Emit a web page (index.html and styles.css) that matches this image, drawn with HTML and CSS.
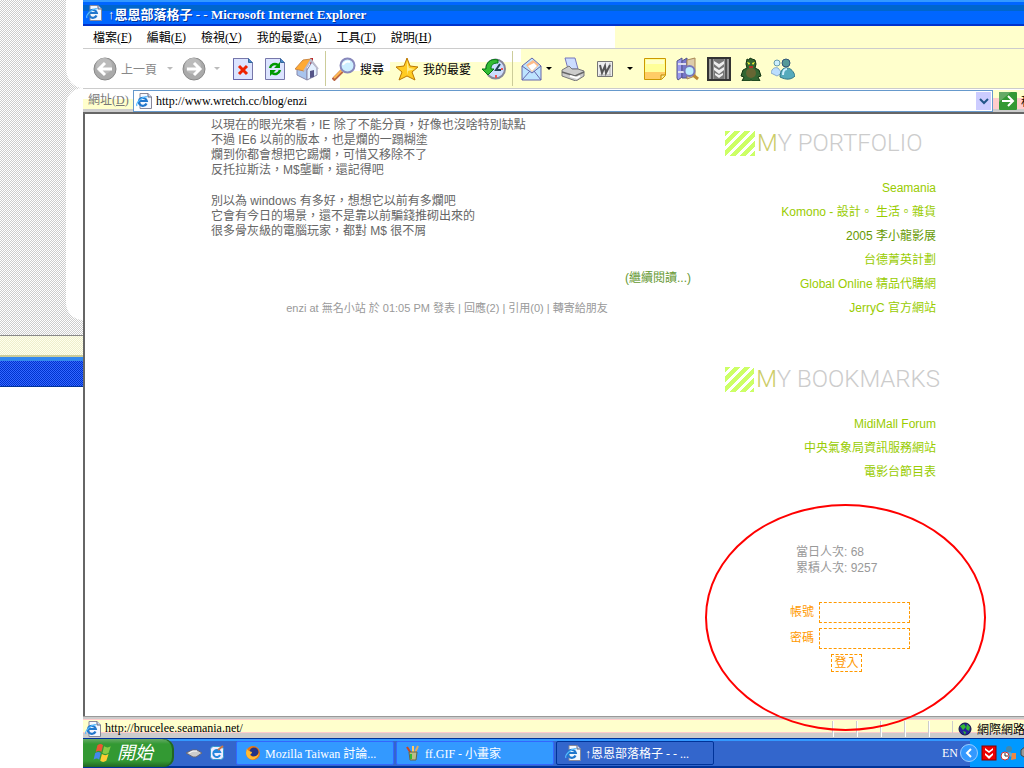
FILE: index.html
```
<!DOCTYPE html>
<html lang="zh-Hant">
<head>
    <meta charset="UTF-8">
    <meta name="viewport" content="width=device-width, initial-scale=1.0">
    <title>↑恩恩部落格子</title>
    <link rel="stylesheet" href="styles.css">
</head>
<body>

    <!-- Shared icon -->
    <svg class="sprite" aria-hidden="true">
        <symbol id="ie-page" viewBox="0 0 16 16">
            <path d="M4 .5h8l3.500 3.500v11.500H4z" fill="#f4f8ff" stroke="#889"/>
            <path d="M12 .5V4h3.500" fill="#cdf" stroke="#667"/>
            <path d="M10.500 10.500A4 4 0 1 1 10.800 8H3.500" fill="none" stroke="#27c" stroke-width="2.200"/>
            <path d="M1 13C-1 10 8 2 11.500 4" fill="none" stroke="#5bf" stroke-width="1.200"/>
        </symbol>
    </svg>

    <!-- Desktop behind the browser -->
    <div class="backdrop">
        <div class="backdrop-pattern">
            <div class="panel panel-top"></div>
            <div class="panel panel-bottom"></div>
        </div>
        <div class="backdrop-status"></div>
        <div class="backdrop-taskbar"></div>
    </div>

    <div class="screen">
        <header class="titlebar">
            <svg class="icon16"><use href="#ie-page"/></svg>
            <span>↑恩恩部落格子 - - Microsoft Internet Explorer</span>
        </header>

        <nav class="menubar">
            <button>檔案(<u>F</u>)</button>
            <button>編輯(<u>E</u>)</button>
            <button>檢視(<u>V</u>)</button>
            <button>我的最愛(<u>A</u>)</button>
            <button>工具(<u>T</u>)</button>
            <button>說明(<u>H</u>)</button>
        </nav>

        <!-- Toolbar -->
        <div class="toolbar">
            <button class="tool tool-back" disabled>
                <svg viewBox="0 0 24 24"><circle cx="12" cy="12" r="11" fill="#aaa" stroke="#888"/><circle cx="11" cy="9" r="8" fill="#bbb"/><path d="M19 12H7M12 6l-6 6 6 6" fill="none" stroke="#fff" stroke-width="3"/></svg>
                <span>上一頁</span>
                <i class="caret"></i>
            </button>
            <button class="tool tool-forward" disabled aria-label="下一頁">
                <svg viewBox="0 0 24 24"><circle cx="12" cy="12" r="11" fill="#aaa" stroke="#888"/><circle cx="11" cy="9" r="8" fill="#bbb"/><path d="M5 12h12M12 6l6 6-6 6" fill="none" stroke="#fff" stroke-width="3"/></svg>
                <i class="caret"></i>
            </button>
            <button class="tool" aria-label="停止">
                <svg viewBox="0 0 24 24"><path d="M2.500 1.500h15l4 4v17h-19z" fill="#dce4ff" stroke="#77a"/><path d="M17.500 1.500v4h4" fill="#48c" stroke="#369"/><path d="M2.500 1.500v21h19" fill="none" stroke="#66a"/><path d="M8 9l8 8M16 9l-8 8" stroke="#e20" stroke-width="3"/></svg>
            </button>
            <button class="tool" aria-label="重新整理">
                <svg viewBox="0 0 24 24"><path d="M2.500 1.500h15l4 4v17h-19z" fill="#dce4ff" stroke="#77a"/><path d="M17.500 1.500v4h4" fill="#48c" stroke="#369"/><path d="M7 11c1-4 5-5 8-3M17 13c-1 4-5 5-8 3" fill="none" stroke="#090" stroke-width="2.500"/><path d="M17 5v6h-6zM7 19v-6h6z" fill="#090"/></svg>
            </button>
            <button class="tool" aria-label="首頁">
                <svg viewBox="0 0 24 24"><path d="M15 1h3v7h-3z" fill="#b22"/><path d="M2 12v6l10 5V11L7 6z" fill="#a9c4ee" stroke="#88a"/><path d="M12 13v10l10-5v-7l-5-6z" fill="#e4f0ff" stroke="#88a"/><path d="M0 12L8 3l8-1-7 12z" fill="#fa3" stroke="#c84"/><path d="M9 14l7-11 7 9" fill="none" stroke="#bbc" stroke-width="2"/><path d="M15 14l4-1v7l-4 1z" fill="#558"/></svg>
            </button>
            <i class="divider"></i>
            <button class="tool tool-text">
                <svg viewBox="0 0 24 24"><path d="M1 23l9-9" stroke="#b64" stroke-width="4"/><path d="M2 21l8-8" stroke="#fb5" stroke-width="2"/><circle cx="15.500" cy="8.500" r="7" fill="#cef" stroke="#88b" stroke-width="2"/><path d="M11 8c1-3 4-4 7-3" fill="none" stroke="#fff" stroke-width="2"/></svg>
                <span>搜尋</span>
            </button>
            <button class="tool tool-text">
                <svg viewBox="0 0 24 24"><path d="M12 1l3 8 8 1-6 5 3 8-8-4-8 4 3-8-6-5 8-1z" fill="#fc2" stroke="#b70"/><path d="M12 4l2 7 6 1-7 2-1 4" fill="#fe8"/></svg>
                <span>我的最愛</span>
            </button>
            <button class="tool" aria-label="記錄">
                <svg viewBox="0 0 24 24"><circle cx="13.500" cy="12" r="9.500" fill="#cdf" stroke="#889" stroke-width="2"/><path d="M18 7l-4 6 5 0" fill="none" stroke="#245" stroke-width="2"/><path d="M16 3C8 1 4 6 4 12H0l6 6 6-6H9c0-4 2-6 7-6z" fill="#3b3" stroke="#071"/><path d="M14 18v3M21 12h-2" stroke="#e55" stroke-width="2"/></svg>
            </button>
            <i class="divider"></i>
            <button class="tool tool-mail" aria-label="郵件">
                <svg viewBox="0 0 24 24"><path d="M2 9L12 1l9 8v14H2z" fill="#bde4ff" stroke="#66a"/><path d="M6 8l7-5 6 5-7 7z" fill="#fb8"/><path d="M8 9l6-3 3 3-5 5z" fill="#fff"/><path d="M2 9l10 7 9-7M2 23l8-9M21 23l-7-9" fill="none" stroke="#66a"/></svg>
                <i class="caret"></i>
            </button>
            <button class="tool" aria-label="列印">
                <svg viewBox="0 0 24 24"><path d="M4 1h10l3 11H7z" fill="#cdf" stroke="#77b"/><path d="M1 13l7-4 3 3h6l6 2v5l-8 5-14-5z" fill="#ccc" stroke="#777"/><path d="M1 15l13 4 9-4" fill="none" stroke="#666" stroke-width="1.500"/><path d="M9 19l7 2 3-2" fill="none" stroke="#fff" stroke-width="2"/></svg>
            </button>
            <button class="tool" aria-label="編輯">
                <svg viewBox="0 0 24 24"><path d="M4.500 4.500h15v15h-15z" fill="#eee" stroke="#777"/><path d="M17 6v12M6 18h12" stroke="#aaa"/><path d="M7 8l2 8 3-7 1 7 4-8" fill="none" stroke="#555" stroke-width="2"/></svg>
            </button>
            <button class="tool tool-caret" aria-label="更多"><i class="caret"></i></button>
            <button class="tool" aria-label="便條">
                <svg viewBox="0 0 24 24"><path d="M1.500 1.500h21v17l-4 4h-17z" fill="#ff9" stroke="#c90"/><path d="M2 15h20v3l-4 4H2z" fill="#fc6"/><path d="M3 3h18v4H3z" fill="#ffc"/><path d="M22 18h-4v4" fill="#fe9" stroke="#b80"/></svg>
            </button>
            <button class="tool" aria-label="參考資料">
                <svg viewBox="0 0 24 24"><path d="M2 4l5-3v19l-4 3-1-2z" fill="#99e" stroke="#558"/><path d="M7 4l5-3v20H7z" fill="#77c" stroke="#558"/><path d="M12 3l8-2v18l-8 3z" fill="#dca" stroke="#a85"/><path d="M3 7h8M3 15h6" stroke="#dde" stroke-width="2"/><path d="M18 18l5 4" stroke="#b83" stroke-width="3"/><circle cx="14.500" cy="14" r="5" fill="#bef" stroke="#77b" stroke-width="2"/></svg>
            </button>
            <button class="tool" aria-label="下載">
                <svg viewBox="0 0 24 24"><path d="M1 1h22v22H1z" fill="#999" stroke="#333" stroke-width="2"/><path d="M5 2v20M19 2v20" stroke="#555" stroke-width="2"/><path d="M7 2h10v20H7z" fill="#777"/><path d="M7 4l5 3 5-3v3l-5 4-5-4zM7 10l5 3 5-3v3l-5 4-5-4zM8 16l4 2 4-2v2l-4 3-4-3z" fill="#eee"/></svg>
            </button>
            <button class="tool" aria-label="怪獸">
                <svg viewBox="0 0 24 24"><path d="M8 2l2 1 1-2 2 1 3 1 1 4-1 4 4 2 2 6-3 1 2 4h-7l-2-1-2 1H3l2-4-3-1 2-6 4-2-1-4z" fill="#363" stroke="#131"/><ellipse cx="12" cy="16" rx="5" ry="5" fill="#663"/><path d="M8 5l3 1-1 2zM16 5l-3 1 1 2z" fill="#ff3"/><path d="M10 10h4" stroke="#d22" stroke-width="1.500"/></svg>
            </button>
            <button class="tool" aria-label="Messenger">
                <svg viewBox="0 0 24 24"><circle cx="6" cy="6" r="3" fill="#cef" stroke="#69a"/><path d="M0 16c1-5 4-6 7-5l4 5-5 3z" fill="#bdf" stroke="#8ac"/><path d="M9 20c0-7 4-10 7-9 4 0 7 4 8 8-4 4-9 4-15 1z" fill="#5ab" stroke="#378"/><circle cx="15" cy="6" r="4" fill="#599" stroke="#357"/><path d="M12 18c0-4 1-6 4-6" fill="none" stroke="#cef" stroke-width="2"/></svg>
            </button>
        </div>

        <!-- Address bar -->
        <form class="addressbar">
            <label for="address">網址(<u>D</u>)</label>
            <div class="address-box">
                <svg class="icon16"><use href="#ie-page"/></svg>
                <input type="text" id="address" value="http://www.wretch.cc/blog/enzi">
                <button type="button" class="address-drop" aria-label="展開">
                    <svg viewBox="0 0 15 18"><path d="M4 7l4 4 4-4" fill="none" stroke="#258" stroke-width="2"/></svg>
                </button>
            </div>
            <button type="button" class="go-button">
                <svg viewBox="0 0 18 18"><rect width="18" height="18" rx="1" fill="#393"/><path d="M0 0h12L0 10z" fill="#6a6"/><path d="M3 9h11M9 4l5 5-5 5" fill="none" stroke="#fff" stroke-width="2"/></svg>
                <span>移至</span>
            </button>
        </form>

        <!-- Blog page -->
        <main class="page">
            <article class="post">
                <p>
                    以現在的眼光來看，IE 除了不能分頁，好像也沒啥特別缺點<br>
                    不過 IE6 以前的版本，也是爛的一蹋糊塗<br>
                    爛到你都會想把它踢爛，可惜又移除不了<br>
                    反托拉斯法，M$壟斷，還記得吧
                </p>
                <p>
                    別以為 windows 有多好，想想它以前有多爛吧<br>
                    它會有今日的場景，還不是靠以前騙錢推砌出來的<br>
                    很多骨灰級的電腦玩家，都對 M$ 很不屑
                </p>
                <a class="read-more" href="#">(繼續閱讀...)</a>
                <div class="post-meta">
                    enzi at 無名小站 於 01:05 PM 發表 | <a href="#">回應(2)</a> | <a href="#">引用(0)</a> | <a href="#">轉寄給朋友</a>
                </div>
            </article>

            <aside class="sidebar">
                <section class="links">
                    <h2><i class="stripes"></i><span><b>M</b>Y PORTFOLIO</span></h2>
                    <ul>
                        <li><a href="#">Seamania</a></li>
                        <li><a href="#">Komono - 設計。 生活。雜貨</a></li>
                        <li><a href="#" class="active">2005 李小龍影展</a></li>
                        <li><a href="#">台德菁英計劃</a></li>
                        <li><a href="#">Global Online 精品代購網</a></li>
                        <li><a href="#">JerryC 官方網站</a></li>
                    </ul>
                </section>
                <section class="links">
                    <h2><i class="stripes"></i><span><b>M</b>Y BOOKMARKS</span></h2>
                    <ul>
                        <li><a href="#">MidiMall Forum</a></li>
                        <li><a href="#">中央氣象局資訊服務網站</a></li>
                        <li><a href="#">電影台節目表</a></li>
                    </ul>
                </section>
                <section class="visitor">
                    <p class="counter">當日人次: 68<br>累積人次: 9257</p>
                    <form class="login">
                        <div class="field">
                            <label for="account">帳號</label>
                            <input type="text" id="account">
                        </div>
                        <div class="field">
                            <label for="password">密碼</label>
                            <input type="password" id="password">
                        </div>
                        <button type="button">登入</button>
                    </form>
                    <div class="red-circle"></div>
                </section>
            </aside>
        </main>

        <footer class="statusbar">
            <svg class="icon16"><use href="#ie-page"/></svg>
            <span class="status-text">http://brucelee.seamania.net/</span>
            <i class="cell"></i>
            <i class="cell"></i>
            <i class="cell"></i>
            <i class="cell"></i>
            <i class="cell"></i>
            <div class="zone">
                <svg viewBox="0 0 14 14"><circle cx="7" cy="7" r="6" fill="#229" stroke="#114"/><path d="M2 4l4-2 2 3-3 3zM9 2l3 3-1 4-3-2zM5 9l3 1-1 3z" fill="#3b3"/></svg>
                <span>網際網路</span>
            </div>
        </footer>

        <!-- Taskbar -->
        <div class="taskbar">
            <button class="start">
                <svg viewBox="0 0 18 18"><path d="M4 2q3-2 5 0L7.500 8q-2-2-5 0z" fill="#e53"/><path d="M10 3q3 2 6 0l-2 6q-3 2-5.500 0z" fill="#8c4"/><path d="M2 9q3-2 5 0l-1.500 6q-2-2-5 0z" fill="#48e"/><path d="M8 10q3 2 6 0l-2 6q-3 2-5.500 0z" fill="#fc3"/></svg>
                <span>開始</span>
            </button>
            <div class="quick">
                <svg class="icon16" viewBox="0 0 16 16"><path d="M0 8l6-3h5l5 3-6 4H7z" fill="#ccc" stroke="#667"/><path d="M3 8l4-2h4" stroke="#fff" fill="none"/></svg>
                <svg class="icon16" viewBox="0 0 16 16"><rect x="1.500" y="1.500" width="13" height="13" rx="3" fill="#eef" stroke="#39c"/><path d="M11 10a3.500 3.500 0 1 1 0-3H5" fill="none" stroke="#28d" stroke-width="2"/><path d="M9 5l5-4" stroke="#c74" stroke-width="2"/></svg>
            </div>
            <button class="task">
                <svg class="icon16" viewBox="0 0 16 16"><circle cx="8" cy="8" r="7" fill="#e71"/><circle cx="9" cy="7" r="4.500" fill="#238"/><path d="M2 3c0 3 3 3 5 4 0 2-2 2-2 3 2 3 7 2 9-2-1 8-12 9-13 0z" fill="#fb3"/></svg>
                <span>Mozilla Taiwan 討論...</span>
            </button>
            <button class="task">
                <svg class="icon16" viewBox="0 0 16 16"><path d="M2 2l5 8" stroke="#c42" stroke-width="2"/><path d="M8 1v9" stroke="#fc6" stroke-width="2"/><path d="M13 1l-4 9" stroke="#da6" stroke-width="2"/><path d="M4 7h8l-1 8H5z" fill="#bb8" stroke="#664"/><path d="M6 9v5" stroke="#3b3" stroke-width="2"/></svg>
                <span>ff.GIF - 小畫家</span>
            </button>
            <button class="task current">
                <svg class="icon16"><use href="#ie-page"/></svg>
                <span>↑恩恩部落格子 - - ...</span>
            </button>
            <span class="lang">EN</span>
            <div class="tray">
                <button class="tray-toggle" aria-label="顯示圖示">
                    <svg viewBox="0 0 18 18"><circle cx="9" cy="9" r="8.500" fill="#39f" stroke="#9cf"/><path d="M11 5L7 9l4 4" fill="none" stroke="#fff" stroke-width="2"/></svg>
                </button>
                <svg class="icon16" viewBox="0 0 16 16"><rect x="1" y="1" width="14" height="14" fill="#e00" stroke="#800"/><path d="M4 3l4 3 4-3v2L8 8 4 5zM4 8l4 3 4-3v2l-4 4-4-4z" fill="#fff"/></svg>
                <svg class="icon16" viewBox="0 0 16 16"><circle cx="9" cy="4" r="3" fill="#48a"/><path d="M5 11c1-5 8-5 9 1z" fill="#6ac"/><path d="M12 8h4v6l-5 1z" fill="#e84"/><circle cx="5" cy="11" r="4" fill="#fff" stroke="#c33"/><path d="M5 8v3h3" fill="none" stroke="#333"/></svg>
                <svg class="icon16" viewBox="0 0 16 16"><path d="M2 5l5-4h5v13H8l-6-4z" fill="#999" stroke="#444"/><circle cx="9" cy="7" r="3" fill="#ccc"/></svg>
            </div>
        </div>
    </div>

</body>
</html>
```
FILE: styles.css
```
* {
    box-sizing: border-box;
}

body {
    display: flex;
    min-height: 100vh;
    margin: 0;
    background-color: #ffffff;
    font-family: "Liberation Serif", "Noto Sans CJK TC", serif;
    font-size: 12px;
    color: #000000;
    overflow: hidden;
}

button, input {
    font: inherit;
    color: inherit;
    background: none;
    border: none;
    border-radius: 0;
    margin: 0;
    padding: 0;
    outline: none;
}

button {
    display: flex;
    align-items: center;
    white-space: nowrap;
    cursor: pointer;
}

svg {
    display: block;
    flex-shrink: 0;
}

a {
    color: inherit;
    text-decoration: none;
}

.sprite {
    position: absolute;
    width: 0;
    height: 0;
}

.icon16 {
    width: 16px;
    height: 16px;
}

/* Desktop strip */
.backdrop {
    flex: 0 0 83px;
}

.backdrop-pattern {
    display: flex;
    flex-direction: column;
    align-items: flex-end;
    height: 335px;
    background: repeating-conic-gradient(#cccccc 0 25%, #ffffff 0 50%) 0 0 / 2px 2px;
}

.panel {
    width: 17px;
    background-color: #ffffff;
}

.panel-top {
    height: 88px;
    border-bottom-left-radius: 17px 20px;
}

.panel-bottom {
    height: 232px;
    border-radius: 17px 0 0 17px;
}

.backdrop-status {
    height: 22px;
    border-top: 1px solid #888888;
    border-bottom: 2px solid #cccc99;
    background: repeating-conic-gradient(#eeeecc 0 25%, #ffffee 0 50%) 0 0 / 2px 2px;
}

.backdrop-taskbar {
    height: 30px;
    border-top: 4px solid #3388ee;
    border-bottom: 1px solid #003399;
    background: repeating-conic-gradient(#0033cc 0 25%, #3366ff 0 50%) 0 0 / 2px 2px;
}

.screen {
    display: flex;
    flex-direction: column;
    flex: 1;
    min-width: 0;
}

/* Browser chrome */
.titlebar {
    display: flex;
    align-items: center;
    gap: 6px;
    height: 26px;
    padding-left: 3px;
    background: linear-gradient(#3399ff 0 2px, #0066ff 2px 5px, #0066cc 5px 11px, #0066ff 11px 24px, #0033cc 24px);
    color: #ffffff;
    font-size: 13px;
    font-weight: bold;
    white-space: nowrap;
    text-shadow: 1px 1px #003399;
}

.menubar {
    display: flex;
    gap: 15px;
    height: 23px;
    padding-left: 10px;
    border-bottom: 1px solid #cccccc;
    background: linear-gradient(90deg, #ffffff 532px, #ffffcc 532px);
}

.toolbar {
    display: flex;
    align-items: center;
    height: 40px;
    padding-left: 8px;
    border-bottom: 1px solid #cccccc;
    background:
        linear-gradient(#ffffff, #ffffff) 0 0 / 438px 13px no-repeat,
        linear-gradient(#ffffff, #ffffff) 0 0 / 307px 22px no-repeat,
        linear-gradient(#ffffff, #ffffff) 0 0 / 257px 39px no-repeat,
        #ffffcc;
}

.tool {
    justify-content: center;
    flex: 0 0 32px;
    height: 32px;
}

.tool svg {
    width: 24px;
    height: 24px;
}

.tool:disabled {
    color: #888888;
}

.caret {
    border: 3px solid transparent;
    border-top-color: #000000;
    border-bottom-width: 0;
}

.tool:disabled .caret {
    border-top-color: #bbbbbb;
}

.tool-back {
    flex-basis: 84px;
    gap: 4px;
}

.tool-back .caret {
    margin-left: 6px;
}

.tool-forward {
    flex-basis: 52px;
    gap: 8px;
}

.tool-text {
    flex: 0 0 auto;
    gap: 4px;
    padding: 0 7px 0 4px;
}

.tool-mail {
    flex-basis: 42px;
    gap: 2px;
}

.tool-caret {
    flex-basis: 18px;
}

.divider {
    width: 1px;
    height: 35px;
    margin: 0 2px;
    background-color: #cccc99;
}

.addressbar {
    display: flex;
    height: 23px;
    padding: 1px 0 0 5px;
    border-bottom: 1px solid #cccccc;
    background: linear-gradient(#ffffff 10px, #ffffcc 10px 20px, #cccccc 20px);
}

.addressbar label {
    width: 45px;
    line-height: 20px;
    color: #777777;
    white-space: nowrap;
}

.address-box {
    display: flex;
    flex: 1;
    align-items: center;
    min-width: 0;
    height: 22px;
    padding: 0 1px 0 2px;
    border: 1px solid #6699cc;
    background-color: #ffffff;
}

.address-box input {
    flex: 1;
    min-width: 0;
    padding-left: 4px;
}

.address-drop {
    width: 15px;
    height: 18px;
    background-color: #ccccff;
}

.address-drop svg {
    width: 15px;
    height: 18px;
}

.go-button {
    flex: 0 0 31px;
    gap: 4px;
    padding-left: 6px;
    overflow: hidden;
    background: linear-gradient(#ffffcc 8px, #ffcccc 8px 19px, #cccccc 19px);
}

.go-button svg {
    width: 18px;
    height: 18px;
}

/* Blog page */
.page {
    display: flex;
    flex: 1;
    padding-left: 126px;
    border-left: 2px solid #666666;
    border-top: 2px solid #666666;
    font-family: "Liberation Sans", "Noto Sans CJK TC", sans-serif;
    line-height: 15px;
}

.post {
    flex: 0 1 480px;
    padding-top: 4px;
    color: #666666;
}

.post p {
    margin: 0 0 16px;
}

.read-more {
    display: block;
    margin-top: 32px;
    text-align: right;
    color: #669933;
}

.post-meta {
    margin-top: 15px;
    padding-right: 8px;
    text-align: center;
    font-size: 11px;
    color: #999999;
}

.sidebar {
    flex: 0 0 215px;
    min-width: 0;
    margin-left: 34px;
}

.links {
    height: 236px;
    padding-top: 13px;
}

.links h2 {
    display: flex;
    align-items: center;
    gap: 2px;
    height: 32px;
    margin: 0;
    font-family: Roboto, sans-serif;
    font-size: 24px;
    font-weight: 300;
    color: #cccccc;
    white-space: nowrap;
}

.links h2 b {
    font-weight: 300;
    color: #cccc66;
}

.stripes {
    width: 30px;
    height: 25px;
    background: repeating-linear-gradient(135deg, #ccff66 0 4px, #ffffff 4px 7px);
}

.links ul {
    margin: 0;
    padding: 17px 4px 0 0;
    list-style: none;
    text-align: right;
    line-height: 24px;
    color: #99cc00;
}

.links .active {
    color: #669900;
}

.visitor {
    position: relative;
    margin-top: -42px;
    padding-left: 65px;
    color: #999999;
}

.counter {
    margin: 0;
    padding: 0 0 26px 6px;
    line-height: 16px;
}

.login {
    display: flex;
    flex-direction: column;
    gap: 5px;
    color: #ff9900;
}

.field {
    display: flex;
    align-items: center;
    gap: 5px;
}

.login input {
    width: 91px;
    height: 21px;
    border: 1px dashed #ff9900;
}

.login button {
    justify-content: center;
    width: 31px;
    height: 18px;
    margin-left: 41px;
    border: 1px dashed #ff9900;
}

/* Hand-drawn mark around the login box */
.red-circle {
    position: absolute;
    top: -40px;
    left: -20px;
    width: 281px;
    height: 227px;
    border: 2px solid #ff0000;
    border-radius: 50%;
    pointer-events: none;
}

/* Status bar */
.statusbar {
    display: flex;
    align-items: center;
    height: 22px;
    padding: 3px 0 1px 2px;
    border-top: 1px solid #999999;
    background: linear-gradient(#cccccc 2px, #ffcccc 2px 3px, #ffffcc 3px 15px, #ffcccc 15px 16px, #cccccc 16px);
}

.status-text {
    flex: 1;
    padding-left: 4px;
}

.cell {
    flex: 0 0 24px;
    height: 16px;
    border-left: 1px solid #cccccc;
    box-shadow: inset 1px 0 #ffffff;
}

.zone {
    display: flex;
    align-items: center;
    flex: 0 0 72px;
    gap: 5px;
    height: 16px;
    padding-left: 5px;
    border-left: 1px solid #cccccc;
    white-space: nowrap;
    overflow: hidden;
}

.zone svg {
    width: 14px;
    height: 14px;
}

/* Taskbar */
.taskbar {
    display: flex;
    align-items: center;
    gap: 2px;
    height: 30px;
    background: linear-gradient(#003399 1px, #3399ff 1px 3px, #3366cc 3px 28px, #003399 28px);
    color: #ffffff;
}

.start {
    flex: 0 0 91px;
    gap: 4px;
    height: 28px;
    padding-left: 10px;
    border-radius: 0 10px 10px 0;
    background: linear-gradient(#66aa66, #339933 5px, #339933 22px, #226622);
    box-shadow: inset -2px 0 #226622;
    font-size: 18px;
    line-height: 20px;
    font-style: italic;
}

.start svg {
    width: 20px;
    height: 20px;
}

.quick {
    display: flex;
    flex: 0 0 58px;
    gap: 7px;
    padding-left: 10px;
}

.task {
    flex: 0 1 158px;
    gap: 4px;
    height: 24px;
    padding-left: 8px;
    border: 1px solid #3366ff;
    border-radius: 2px;
    background-color: #3399ff;
    overflow: hidden;
}

.task.current {
    border-color: #003399;
    background-color: #3366cc;
}

.lang {
    flex: 1;
    text-align: right;
}

.tray {
    display: flex;
    align-items: center;
    flex: 0 0 64px;
    gap: 3px;
    height: 28px;
    overflow: hidden;
    background: linear-gradient(90deg, transparent 10px, #0099ff 10px);
}

.tray-toggle svg {
    width: 18px;
    height: 18px;
}
```
